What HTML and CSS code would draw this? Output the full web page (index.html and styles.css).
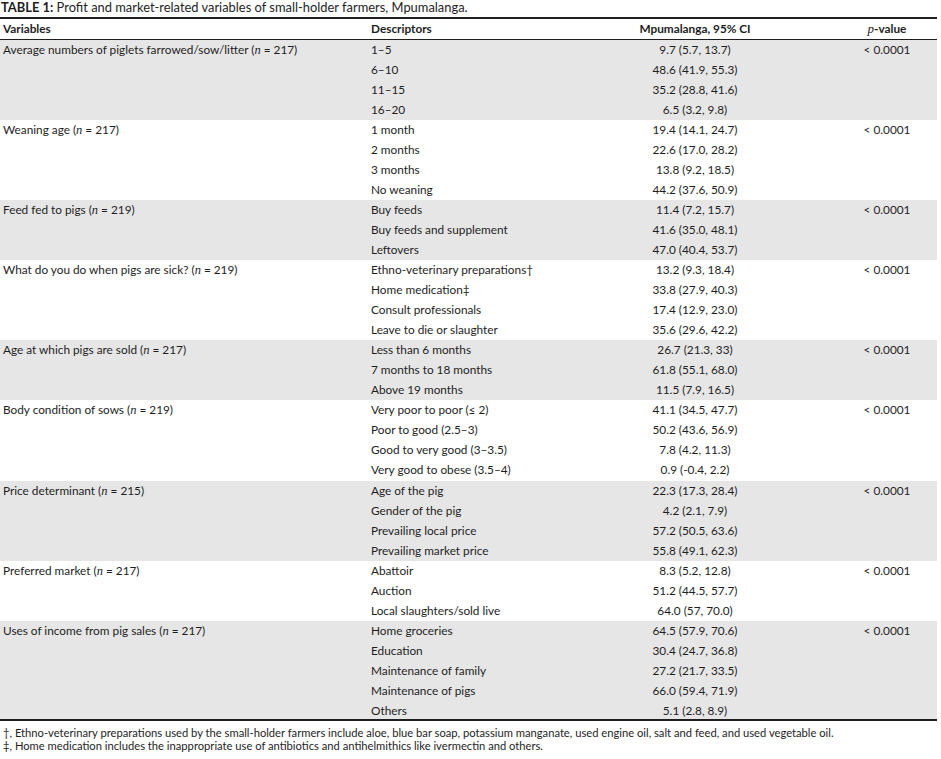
FILE: index.html
```html
<!DOCTYPE html>
<html>
<head>
<meta charset="utf-8">
<link rel="stylesheet" href="styles.css">
</head>
<body>
<div class="wrap">
  <div class="title"><b>TABLE 1:</b> Profit and market-related variables of small-holder farmers, Mpumalanga.</div>
  <table class="tbl">
    <colgroup>
      <col class="c1"><col class="c2"><col class="c3"><col class="c4">
    </colgroup>
    <thead>
      <tr><th class="l">Variables</th><th class="l">Descriptors</th><th>Mpumalanga, 95% CI</th><th><i class="p">p</i>-value</th></tr>
    </thead>
    <tbody class="g">
      <tr><td>Average numbers of piglets farrowed/sow/litter (<i class="n">n</i> = 217)</td><td>1–5</td><td class="c">9.7 (5.7, 13.7)</td><td class="c">&lt; 0.0001</td></tr>
      <tr><td></td><td>6–10</td><td class="c">48.6 (41.9, 55.3)</td><td></td></tr>
      <tr><td></td><td>11–15</td><td class="c">35.2 (28.8, 41.6)</td><td></td></tr>
      <tr><td></td><td>16–20</td><td class="c">6.5 (3.2, 9.8)</td><td></td></tr>
    </tbody>
    <tbody>
      <tr><td>Weaning age (<i class="n">n</i> = 217)</td><td>1 month</td><td class="c">19.4 (14.1, 24.7)</td><td class="c">&lt; 0.0001</td></tr>
      <tr><td></td><td>2 months</td><td class="c">22.6 (17.0, 28.2)</td><td></td></tr>
      <tr><td></td><td>3 months</td><td class="c">13.8 (9.2, 18.5)</td><td></td></tr>
      <tr><td></td><td>No weaning</td><td class="c">44.2 (37.6, 50.9)</td><td></td></tr>
    </tbody>
    <tbody class="g">
      <tr><td>Feed fed to pigs (<i class="n">n</i> = 219)</td><td>Buy feeds</td><td class="c">11.4 (7.2, 15.7)</td><td class="c">&lt; 0.0001</td></tr>
      <tr><td></td><td>Buy feeds and supplement</td><td class="c">41.6 (35.0, 48.1)</td><td></td></tr>
      <tr><td></td><td>Leftovers</td><td class="c">47.0 (40.4, 53.7)</td><td></td></tr>
    </tbody>
    <tbody>
      <tr><td>What do you do when pigs are sick? (<i class="n">n</i> = 219)</td><td>Ethno-veterinary preparations†</td><td class="c">13.2 (9.3, 18.4)</td><td class="c">&lt; 0.0001</td></tr>
      <tr><td></td><td>Home medication‡</td><td class="c">33.8 (27.9, 40.3)</td><td></td></tr>
      <tr><td></td><td>Consult professionals</td><td class="c">17.4 (12.9, 23.0)</td><td></td></tr>
      <tr><td></td><td>Leave to die or slaughter</td><td class="c">35.6 (29.6, 42.2)</td><td></td></tr>
    </tbody>
    <tbody class="g">
      <tr><td>Age at which pigs are sold (<i class="n">n</i> = 217)</td><td>Less than 6 months</td><td class="c">26.7 (21.3, 33)</td><td class="c">&lt; 0.0001</td></tr>
      <tr><td></td><td>7 months to 18 months</td><td class="c">61.8 (55.1, 68.0)</td><td></td></tr>
      <tr><td></td><td>Above 19 months</td><td class="c">11.5 (7.9, 16.5)</td><td></td></tr>
    </tbody>
    <tbody>
      <tr><td>Body condition of sows (<i class="n">n</i> = 219)</td><td>Very poor to poor (≤ 2)</td><td class="c">41.1 (34.5, 47.7)</td><td class="c">&lt; 0.0001</td></tr>
      <tr><td></td><td>Poor to good (2.5–3)</td><td class="c">50.2 (43.6, 56.9)</td><td></td></tr>
      <tr><td></td><td>Good to very good (3–3.5)</td><td class="c">7.8 (4.2, 11.3)</td><td></td></tr>
      <tr class="tall"><td></td><td>Very good to obese (3.5–4)</td><td class="c">0.9 (-0.4, 2.2)</td><td></td></tr>
    </tbody>
    <tbody class="g">
      <tr><td>Price determinant (<i class="n">n</i> = 215)</td><td>Age of the pig</td><td class="c">22.3 (17.3, 28.4)</td><td class="c">&lt; 0.0001</td></tr>
      <tr><td></td><td>Gender of the pig</td><td class="c">4.2 (2.1, 7.9)</td><td></td></tr>
      <tr><td></td><td>Prevailing local price</td><td class="c">57.2 (50.5, 63.6)</td><td></td></tr>
      <tr><td></td><td>Prevailing market price</td><td class="c">55.8 (49.1, 62.3)</td><td></td></tr>
    </tbody>
    <tbody>
      <tr><td>Preferred market (<i class="n">n</i> = 217)</td><td>Abattoir</td><td class="c">8.3 (5.2, 12.8)</td><td class="c">&lt; 0.0001</td></tr>
      <tr><td></td><td>Auction</td><td class="c">51.2 (44.5, 57.7)</td><td></td></tr>
      <tr><td></td><td>Local slaughters/sold live</td><td class="c">64.0 (57, 70.0)</td><td></td></tr>
    </tbody>
    <tbody class="g">
      <tr><td>Uses of income from pig sales (<i class="n">n</i> = 217)</td><td>Home groceries</td><td class="c">64.5 (57.9, 70.6)</td><td class="c">&lt; 0.0001</td></tr>
      <tr><td></td><td>Education</td><td class="c">30.4 (24.7, 36.8)</td><td></td></tr>
      <tr><td></td><td>Maintenance of family</td><td class="c">27.2 (21.7, 33.5)</td><td></td></tr>
      <tr><td></td><td>Maintenance of pigs</td><td class="c">66.0 (59.4, 71.9)</td><td></td></tr>
      <tr class="last"><td></td><td>Others</td><td class="c">5.1 (2.8, 8.9)</td><td></td></tr>
    </tbody>
  </table>
  <div class="notes">
    <div>†, Ethno-veterinary preparations used by the small-holder farmers include aloe, blue bar soap, potassium manganate, used engine oil, salt and feed, and used vegetable oil.</div>
    <div>‡, Home medication includes the inappropriate use of antibiotics and antihelmithics like ivermectin and others.</div>
  </div>
</div>
</body>
</html>
```

FILE: styles.css
```css
html, body {
  margin: 0;
  padding: 0;
  background: #ffffff;
}
body {
  font-family: "Lato", "Open Sans", sans-serif;
  font-size: 11.8px;
  color: #1e1e1e;
}
.wrap {
  width: 937px;
}
.title {
  height: 17px;
  line-height: 15px;
  font-size: 12.9px;
  padding-left: 1px;
  border-bottom: 2px solid #1e1e1e;
}
.title b {
  font-weight: 700;
}
.tbl {
  width: 937px;
  border-collapse: collapse;
  table-layout: fixed;
}
.c1 { width: 371px; }
.c2 { width: 182px; }
.c3 { width: 284px; }
.c4 { width: 100px; }
th, td {
  height: 20px;
  padding: 0;
  vertical-align: middle;
  white-space: nowrap;
  line-height: 20px;
}
th {
  font-weight: 700;
  text-align: center;
  border-bottom: 1px solid #1e1e1e;
  height: 19px;
}
th.l, td:first-child {
  text-align: left;
}
th:first-child, td:first-child {
  padding-left: 3px;
}
td.c {
  text-align: center;
}
.p {
  font-family: "Liberation Serif", serif;
  font-weight: 400;
  font-size: 13px;
}
.n {
  font-family: "Liberation Serif", serif;
  font-size: 12.5px;
}
tbody.g td {
  background: #e6e6e6;
}
tr.tall td {
  height: 21px;
  line-height: 20px;
  vertical-align: top;
}
tr.last td {
  height: 16px;
  line-height: 16px;
  padding-top: 2px;
  vertical-align: top;
  border-bottom: 2px solid #1e1e1e;
}
.notes {
  padding-top: 5px;
  font-size: 11.2px;
  line-height: 13px;
  padding-left: 3px;
}
```
